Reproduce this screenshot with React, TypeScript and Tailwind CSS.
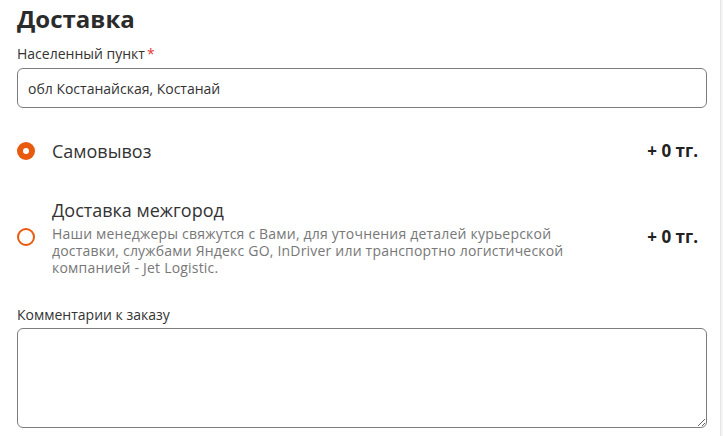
import React, { useState } from 'react';

const Radio = ({ checked }: { checked: boolean }) => (
    <span
        className={`flex items-center justify-center w-[18px] h-[18px] rounded-full shrink-0 ${
            checked ? 'bg-[#e85a0e]' : 'border-2 border-[#e85a0e] bg-white'
        }`}
    >
        {checked && <span className="w-[6px] h-[6px] rounded-full bg-white" />}
    </span>
);

export default function App() {
    const [city, setCity] = useState('обл Костанайская, Костанай');
    const [method, setMethod] = useState<'pickup' | 'intercity'>('pickup');
    const [comment, setComment] = useState('');

    return (
        <div className="flex min-h-screen bg-white font-['Open_Sans',sans-serif] text-[#333]">
            <div className="w-[720px] shrink-0 bg-white pl-[17px] pr-[13px] pt-[4px]">
                <h2 className="text-[24px] leading-[29px] font-bold text-[#2b2b2b]">Доставка</h2>

                <label className="block mt-[11px] text-[14px] leading-[20px] text-[#333]">
                    Населенный пункт<span className="text-[#e53935] ml-[2px]">*</span>
                </label>
                <input
                    type="text"
                    value={city}
                    onChange={(e) => setCity(e.target.value)}
                    className="block w-full mt-[4px] h-[40px] px-[10px] rounded-[6px] border border-[#7d7d7d] text-[14px] text-[#333] outline-none"
                />

                <div className="mt-[31px]">
                    <div
                        onClick={() => setMethod('pickup')}
                        className="flex items-center h-[24px] cursor-pointer"
                    >
                        <Radio checked={method === 'pickup'} />
                        <span className="ml-[17px] text-[18px] leading-[24px] text-[#333]">Самовывоз</span>
                        <span className="ml-auto mr-[9px] text-[17px] font-bold text-[#222]">+ 0 тг.</span>
                    </div>

                    <div
                        onClick={() => setMethod('intercity')}
                        className="flex items-center mt-[35px] cursor-pointer"
                    >
                        <Radio checked={method === 'intercity'} />
                        <div className="ml-[17px] w-[520px]">
                            <div className="text-[18px] leading-[24px] text-[#333]">Доставка межгород</div>
                            <p className="mt-[3px] text-[14px] leading-[17px] tracking-[0.2px] text-[#777]">
                                Наши менеджеры свяжутся с Вами, для уточнения деталей курьерской доставки, службами Яндекс GO, InDriver или транспортно логистической компанией - Jet Logistic.
                            </p>
                        </div>
                        <span className="ml-auto mr-[9px] text-[17px] font-bold text-[#222]">+ 0 тг.</span>
                    </div>
                </div>

                <label className="block mt-[29px] text-[14px] leading-[20px] text-[#333]">Комментарии к заказу</label>
                <textarea
                    value={comment}
                    onChange={(e) => setComment(e.target.value)}
                    className="block w-full mt-[3px] h-[100px] px-[10px] py-[8px] rounded-[6px] border border-[#7d7d7d] text-[14px] outline-none"
                />
            </div>
            <div className="flex-1 border-l border-[#e6e6e6] bg-[#f4f4f4]" />
        </div>
    );
}
